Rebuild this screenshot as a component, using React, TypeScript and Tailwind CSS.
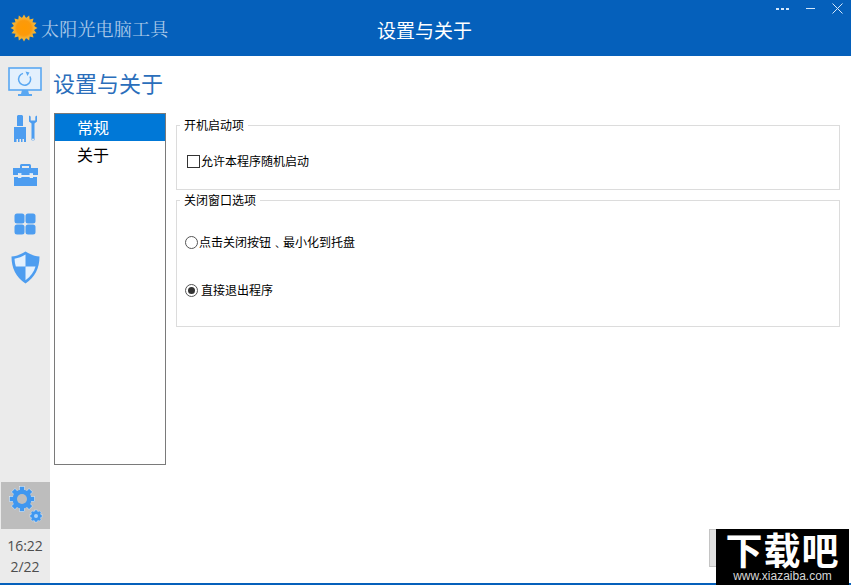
import React from 'react';

const cjk = "font-['Noto_Sans_CJK_SC','Liberation_Sans',sans-serif]";

function Sun() {
  const rays = Array.from({ length: 16 }, (_, i) => i * 22.5);
  return (
    <svg width="28" height="28" viewBox="0 0 28 28">
      <defs>
        <radialGradient id="sun">
          <stop offset="0%" stopColor="#ff9a00" />
          <stop offset="70%" stopColor="#fb9a0c" />
          <stop offset="100%" stopColor="#f5b53a" />
        </radialGradient>
      </defs>
      {rays.map((r) => (
        <polygon key={r} points="12,4 14,0.5 16,4" fill="#f7b32e" transform={`rotate(${r} 14 14)`} />
      ))}
      <circle cx="14" cy="14" r="10.5" fill="url(#sun)" />
    </svg>
  );
}

function MonitorIcon() {
  return (
    <svg width="34" height="30" viewBox="0 0 34 30">
      <rect x="1" y="1" width="32" height="22" fill="#e3f0fd" stroke="#5ba8f2" strokeWidth="1.6" />
      <path d="M22 9.5A6 6 0 1 1 15 6.4" fill="none" stroke="#5ba8f2" strokeWidth="1.5" />
      <path d="M17.5 4.5l4 1-2 3.5z" fill="#5ba8f2" />
      <path d="M14 23h6l1 4h-8zM10 27h14v2H10z" fill="#5ba8f2" />
    </svg>
  );
}

function ToolsIcon() {
  return (
    <svg width="27" height="30" viewBox="0 0 27 30">
      <g fill="#4d9df0">
        <path d="M6 1h4l1 1v7H5V2z" />
        <rect x="5" y="9" width="6" height="3" />
        <path d="M2 13h12v5H2z" />
        <path d="M2 18h12v10h-2v-3h-1.500v3H9v-3H7.500v3H6v-3H4.500v3H2z" />
        <path d="M17 1.500v6l2.500 2V26a2.500 2.500 0 0 0 3 0V9.500l2.500-2v-6l-1.700 1v4h-4.600v-4z" />
      </g>
      <circle cx="21" cy="25.500" r="1" fill="#ebebeb" />
    </svg>
  );
}

function CaseIcon() {
  return (
    <svg width="27" height="24" viewBox="0 0 27 24">
      <path d="M8 5V2.500A1.500 1.500 0 0 1 9.500 1h8A1.500 1.500 0 0 1 19 2.500V5h-2V3h-7v2z" fill="#4d9df0" />
      <path d="M1 5h25v7h-5v-1h-3v1H9v-1H6v1H1z" fill="#4d9df0" />
      <path d="M2 14h4v1h3v-1h9v1h3v-1h4v9H2z" fill="#4d9df0" />
      <path d="M9 12.500h9" stroke="#e3f0fd" strokeWidth="1" />
      <rect x="6.500" y="10.500" width="2.500" height="4" fill="none" stroke="#e3f0fd" strokeWidth="0.8" />
      <rect x="18" y="10.500" width="2.500" height="4" fill="none" stroke="#e3f0fd" strokeWidth="0.8" />
    </svg>
  );
}

function GridIcon() {
  return (
    <svg width="22" height="22" viewBox="0 0 22 22" fill="#4d9df0">
      <rect x="0.500" y="0.500" width="10" height="10" rx="2.500" />
      <rect x="11.500" y="0.500" width="10" height="10" rx="2.500" />
      <rect x="0.500" y="11.500" width="10" height="10" rx="2.500" />
      <rect x="11.500" y="11.500" width="10" height="10" rx="2.500" />
    </svg>
  );
}

function ShieldIcon() {
  return (
    <svg width="29" height="33" viewBox="0 0 29 33">
      <path d="M14.500 0.500C10 3.500 5.500 5 0.500 5.500C0.500 17 5 26 14.500 32.500C24 26 28.500 17 28.500 5.500C23.500 5 19 3.500 14.500 0.500Z" fill="#4d9df0" />
      <path d="M14.500 3.500C11 5.800 7.500 7 3.500 7.800C3.700 10.500 4 13 4.800 15.500H14.500Z" fill="#e3f0fd" />
      <path d="M14.500 15.500H24.500C23.200 20.500 19.800 25.500 14.500 29.300Z" fill="#e3f0fd" />
    </svg>
  );
}

function GearsIcon() {
  const teeth = Array.from({ length: 8 }, (_, i) => i * 45);
  const small = Array.from({ length: 8 }, (_, i) => i * 45);
  return (
    <svg width="42" height="42" viewBox="0 0 42 42">
      {teeth.map((r) => (
        <rect key={r} x="14.500" y="1.500" width="5" height="6" fill="#3f97f0" stroke="#e8f2fc" strokeWidth="0.5" transform={`rotate(${r} 17 14)`} />
      ))}
      <circle cx="17" cy="14" r="9.500" fill="#3f97f0" />
      <circle cx="17" cy="14" r="5" fill="#bdbdbd" />
      {small.map((r) => (
        <rect key={r} x="29.500" y="25" width="3" height="3.500" fill="#3f97f0" stroke="#e8f2fc" strokeWidth="0.4" transform={`rotate(${r} 31 31)`} />
      ))}
      <circle cx="31" cy="31" r="4.800" fill="#3f97f0" />
      <circle cx="31" cy="31" r="2" fill="#a9d2fa" />
    </svg>
  );
}

function GroupBox({ title, className, children }: { title: string; className: string; children: React.ReactNode }) {
  return (
    <div className={`relative border border-[#dcdcdc] ${className}`}>
      <span className="absolute left-[3px] top-[-10px] bg-white px-[4px] text-[12px] leading-[18px] text-black">{title}</span>
      {children}
    </div>
  );
}

export default function App() {
  return (
    <div className={`relative flex h-[585px] w-[851px] flex-col overflow-hidden bg-white ${cjk}`}>
      {/* Title bar */}
      <div className="relative flex h-[56px] shrink-0 items-center bg-[#0560bb] pl-[10px]">
        <Sun />
        <span className="ml-[3px] text-[18px] leading-none tracking-[0.2px] text-[#a9c8e8] font-['Noto_Serif_CJK_SC','Noto_Sans_CJK_SC',serif]">太阳光电脑工具</span>
        <span className="absolute left-[377px] top-[17px] text-[19px] leading-[26px] text-white">设置与关于</span>
        <div className="absolute right-[8px] top-[3px] flex items-center gap-[14px] text-[#d5e8fb]">
          <div className="flex gap-[2px]">
            <i className="block h-[2px] w-[3px] bg-[#d5e8fb]" />
            <i className="block h-[2px] w-[3px] bg-[#d5e8fb]" />
            <i className="block h-[2px] w-[3px] bg-[#d5e8fb]" />
          </div>
          <i className="ml-[3px] block h-px w-[9px] bg-[#d5e8fb]" />
          <svg width="11" height="11" viewBox="0 0 11 11" className="ml-[3px]">
            <path d="M0.500 0.500l10 10M10.500 0.500l-10 10" stroke="#d5e8fb" strokeWidth="1" />
          </svg>
        </div>
      </div>

      <div className="flex min-h-0 flex-1">
        {/* Left icon rail */}
        <div className="flex w-[50px] shrink-0 flex-col items-center bg-[#ebebeb]">
          <div className="mt-[11px]"><MonitorIcon /></div>
          <div className="mt-[17px]"><ToolsIcon /></div>
          <div className="mt-[19px]"><CaseIcon /></div>
          <div className="mt-[26px]"><GridIcon /></div>
          <div className="mt-[16px]"><ShieldIcon /></div>
          <div className="mt-auto flex h-[47px] w-[49px] items-center justify-center self-end bg-[#bdbdbd]">
            <GearsIcon />
          </div>
          <div className="mt-[6px] h-[48px] text-center text-[14px] leading-[21px] text-[#4d4d4d] font-['Open_Sans',sans-serif]">
            <div>16:22</div>
            <div>2/22</div>
          </div>
        </div>

        {/* Content */}
        <div className="relative flex min-w-0 flex-1 flex-col">
          <div className="ml-[3px] mt-[10px] h-[32px] text-[22px] leading-[32px] text-[#2a6ebb]">设置与关于</div>
          <div className="ml-[4px] mt-[15px] flex">
            <div className="h-[352px] w-[112px] shrink-0 border border-[#7a7a7a] text-[16px] leading-[27px]">
              <div className="h-[27px] bg-[#0078d7] pl-[22px] text-white">常规</div>
              <div className="h-[27px] pl-[22px] text-black">关于</div>
            </div>
            <div className="ml-[10px] flex flex-1 flex-col pr-[11px]">
              <GroupBox title="开机启动项" className="mt-[12px] h-[65px]">
                <div className="ml-[10px] mt-[26px] flex items-center text-[12px] leading-[18px] text-black">
                  <span className="block h-[13px] w-[13px] border border-[#333333]" />
                  <span className="ml-px">允许本程序随机启动</span>
                </div>
              </GroupBox>
              <GroupBox title="关闭窗口选项" className="mt-[10px] h-[127px]">
                <div className="ml-[8px] mt-[32px] flex items-center text-[12px] leading-[18px] text-black">
                  <span className="block h-[13px] w-[13px] rounded-full border border-[#555555]" />
                  <span className="ml-px">点击关闭按钮﹑最小化到托盘</span>
                </div>
                <div className="ml-[8px] mt-[30px] flex items-center text-[12px] leading-[18px] text-black">
                  <span className="flex h-[13px] w-[13px] items-center justify-center rounded-full border border-[#555555]">
                    <i className="block h-[7px] w-[7px] rounded-full bg-[#333333]" />
                  </span>
                  <span className="ml-[3px]">直接退出程序</span>
                </div>
              </GroupBox>
            </div>
          </div>
        </div>
      </div>
      <div className="h-[2px] shrink-0 bg-[#0560bb]" />

      {/* Watermark over the window corner */}
      <div className="absolute left-[709px] top-[529px] h-[38px] w-[8px] border border-[#c4c4c4] bg-[#e1e1e1]" />
      <div className="absolute left-[716px] top-[529px] flex h-[56px] w-[133px] flex-col items-center bg-black text-white">
        <div className="text-[37px] font-bold leading-[40px] tracking-[1px]">下载吧</div>
        <div className="text-[12px] leading-[14px] text-[#d8d8d8] font-['Liberation_Sans',sans-serif]">www.xiazaiba.com</div>
      </div>
    </div>
  );
}
